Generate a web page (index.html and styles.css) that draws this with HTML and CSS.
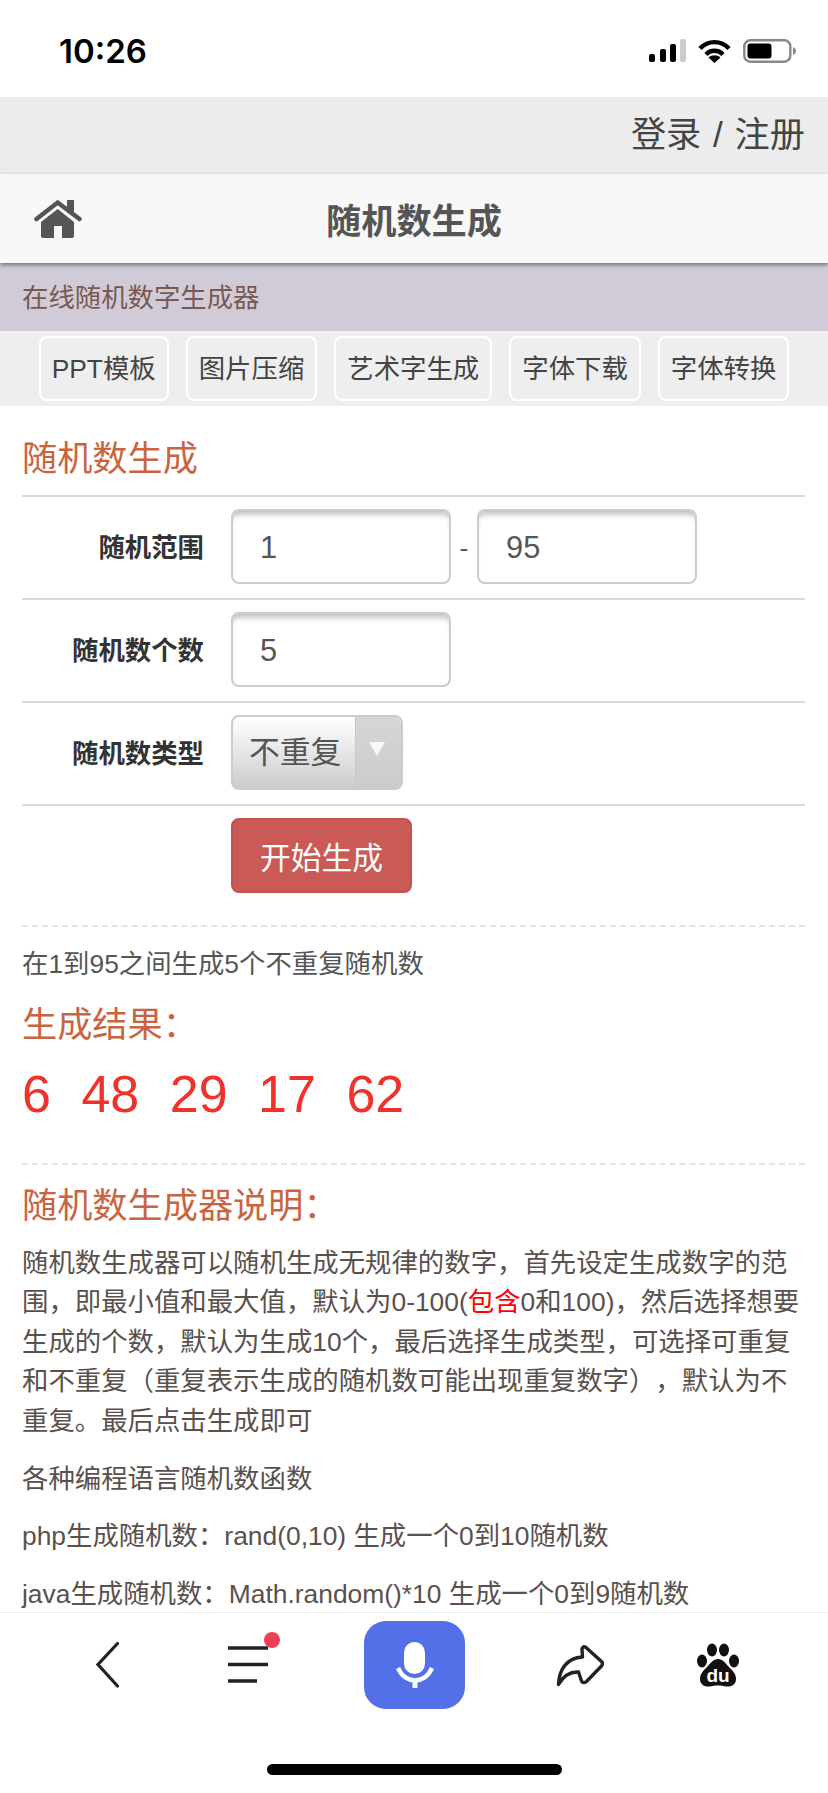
FILE: index.html
```html
<!DOCTYPE html>
<html lang="zh-CN">
<head>
  <meta charset="UTF-8" />
  <meta name="viewport" content="width=device-width, initial-scale=1.0"/>
  <title>随机数生成</title>
  <link rel="stylesheet" href="styles.css">
</head>
<body>
  <div class="page">
    <div class="status-bar">
      <span class="time">10:26</span>
      <div class="status-icons">
        <svg width="37" height="24" viewBox="0 0 37 24">
          <rect x="0" y="15" width="6" height="8" rx="2" fill="#000"/>
          <rect x="11" y="10" width="6" height="13" rx="2" fill="#000"/>
          <rect x="21" y="5" width="6" height="18" rx="2" fill="#000"/>
          <rect x="31" y="0" width="6" height="23" rx="2" fill="#ccc"/>
        </svg>
        <svg width="33" height="24" viewBox="0 0 33 24">
          <path d="M2 9.5C10 1 23 1 31 9.5M8 15.5C12.5 10.5 20.5 10.5 25 15.5" fill="none" stroke="#000" stroke-width="4.4"/>
          <path d="M16.5 24L10.5 18.5C14 15.5 19 15.5 22.5 18.5Z" fill="#000"/>
        </svg>
        <svg width="53" height="24" viewBox="0 0 53 24">
          <rect x="1.3" y="1.3" width="46" height="21.4" rx="6" fill="none" stroke="#888" stroke-width="2.4"/>
          <rect x="4.5" y="4.5" width="24" height="15" rx="3" fill="#000"/>
          <path d="M50 8C52 9 53 10.5 53 12C53 13.5 52 15 50 16Z" fill="#888"/>
        </svg>
      </div>
    </div>

    <div class="login-bar">登录 / 注册</div>

    <header class="title-bar">
      <svg class="home-icon" width="48" height="40" viewBox="0 0 48 40">
        <rect x="33" y="1" width="7" height="13" fill="#555"/>
        <path d="M2.5 20L23.7 3.5L45.5 20" fill="none" stroke="#555" stroke-width="4.5" stroke-linecap="round"/>
        <path d="M7 23L23.7 10L40 23V37Q40 39 38 39H28V27H20V39H9Q7 39 7 37Z" fill="#555"/>
      </svg>
      <h1>随机数生成</h1>
    </header>

    <div class="sub-bar">在线随机数字生成器</div>

    <nav class="tools">
      <a class="tool-btn">PPT模板</a>
      <a class="tool-btn">图片压缩</a>
      <a class="tool-btn">艺术字生成</a>
      <a class="tool-btn">字体下载</a>
      <a class="tool-btn">字体转换</a>
    </nav>

    <main class="content">
      <h2 class="form-title">随机数生成</h2>

      <div class="form-row">
        <label>随机范围</label>
        <input type="text" value="1" />
        <span class="dash">-</span>
        <input type="text" value="95" />
      </div>
      <div class="form-row">
        <label>随机数个数</label>
        <input type="text" value="5" />
      </div>
      <div class="form-row">
        <label>随机数类型</label>
        <div class="select">
          <span class="select-value">不重复</span>
          <span class="select-arrow"><i></i></span>
        </div>
      </div>
      <div class="form-row">
        <label></label>
        <button class="submit">开始生成</button>
      </div>

      <div class="result">
        <p class="summary">在1到95之间生成5个不重复随机数</p>
        <h2>生成结果：</h2>
        <div class="numbers">
          <span>6</span>
          <span>48</span>
          <span>29</span>
          <span>17</span>
          <span>62</span>
        </div>
      </div>

      <div class="intro">
        <h2>随机数生成器说明：</h2>
        <p>随机数生成器可以随机生成无规律的数字，首先设定生成数字的范围，即最小值和最大值，默认为0-100(<span class="red">包含</span>0和100)，然后选择想要生成的个数，默认为生成10个，最后选择生成类型，可选择可重复和不重复（重复表示生成的随机数可能出现重复数字），默认为不重复。最后点击生成即可</p>
        <p>各种编程语言随机数函数</p>
        <p>php生成随机数：rand(0,10) 生成一个0到10随机数</p>
        <p>java生成随机数：Math.random()*10 生成一个0到9随机数</p>
      </div>
    </main>

    <footer class="tab-bar">
      <div class="tabs">
        <svg class="tab-back" width="23" height="46" viewBox="0 0 23 46">
          <path d="M21.5 1.5L2 22.5L21.5 44" fill="none" stroke="#222" stroke-width="3.2" stroke-linecap="round"/>
        </svg>
        <svg class="tab-menu" width="52" height="66" viewBox="0 0 52 66">
          <path d="M0 16H40M0 32.5H40M0 49H29" fill="none" stroke="#222" stroke-width="3.6"/>
          <circle cx="44" cy="8" r="8" fill="#ef3e55"/>
        </svg>
        <div class="tab-mic">
          <svg width="38" height="46" viewBox="0 0 38 46">
            <rect x="8" y="0" width="21" height="32" rx="10.5" fill="#fff"/>
            <path d="M2 26C6 35 13 38.5 19 38.5C25 38.5 32 35 36 26" fill="none" stroke="#fff" stroke-width="4.4"/>
            <path d="M19 38V46" stroke="#fff" stroke-width="5"/>
          </svg>
        </div>
        <svg class="tab-share" width="48" height="44" viewBox="0 0 48 44">
          <path d="M2.5 41.5C3 26 11 15 26.5 14L26 6Q27 2.5 30 4.5L45.5 18.5Q47.5 20.5 45.5 23L30.5 38.5Q27.5 41 25.5 38L22.5 29C14 28.5 8 32 2.5 41.5Z" fill="none" stroke="#222" stroke-width="3.4" stroke-linejoin="round"/>
        </svg>
        <svg class="tab-baidu" width="42" height="44" viewBox="0 0 42 44">
          <ellipse cx="5" cy="18" rx="5" ry="6.5" fill="#111"/>
          <ellipse cx="15" cy="7" rx="5" ry="6.5" fill="#111"/>
          <ellipse cx="27" cy="7" rx="5" ry="6.5" fill="#111"/>
          <ellipse cx="37" cy="18" rx="5" ry="6.5" fill="#111"/>
          <path d="M21 16C26 16 28 20 32 24C36 28 39 31 39 36C39 41 35 44 30 43.5C26 43 24 42.5 21 42.5C18 42.5 16 43 12 43.5C7 44 3 41 3 36C3 31 6 28 10 24C14 20 16 16 21 16Z" fill="#111"/>
          <text class="baidu-text" x="21" y="39" text-anchor="middle">du</text>
        </svg>
      </div>
      <div class="home-indicator"></div>
    </footer>
  </div>
</body>
</html>
```

FILE: styles.css
```css
* {
  box-sizing: border-box;
}

body {
  margin: 0;
  background: #fff;
  font-family: "Liberation Sans", "Noto Sans CJK SC", sans-serif;
  color: #555;
}

.page {
  height: 1793px;
  display: flex;
  flex-direction: column;
  overflow: hidden;
}

/* Phone status bar */
.status-bar {
  height: 97px;
  flex: none;
  padding: 4px 32px 0 59px;
  display: flex;
  justify-content: space-between;
  align-items: center;
}

.time {
  font-family: Inter, "Liberation Sans", sans-serif;
  font-size: 33px;
  font-weight: 600;
  color: #000;
}

.status-icons {
  display: flex;
  align-items: center;
  gap: 12px;
}

.login-bar {
  height: 77px;
  flex: none;
  padding-right: 23px;
  background: #ececec;
  color: #444;
  font-size: 35.2px;
  line-height: 75px;
  word-spacing: 2px;
  text-align: right;
}

.title-bar {
  height: 89px;
  flex: none;
  padding: 0 82px 0 34px;
  display: flex;
  align-items: center;
  background: #f8f8f8;
  box-shadow: 0 2px 4px rgba(0, 0, 0, 0.45);
  position: relative;
}

.home-icon {
  flex: none;
}

.title-bar h1 {
  flex: 1;
  margin: 0;
  font-size: 35.2px;
  font-weight: bold;
  color: #555;
  text-align: center;
}

.sub-bar {
  height: 68px;
  flex: none;
  padding-left: 22px;
  background: #d1cbd8;
  color: #7a5a50;
  font-size: 26.4px;
  line-height: 70px;
}

.tools {
  height: 75px;
  flex: none;
  display: flex;
  justify-content: center;
  align-items: center;
  gap: 17px;
  background: #eee;
}

.tool-btn {
  height: 65px;
  padding: 0 11px;
  border: 2px solid #fff;
  border-radius: 8px;
  color: #444;
  font-size: 26.4px;
  line-height: 63px;
}

.content {
  flex: 1;
  min-height: 0;
  padding: 0 23px 0 22px;
  overflow: hidden;
}

h2 {
  margin: 0;
  color: #c9643f;
  font-size: 35.2px;
  font-weight: normal;
  line-height: 48px;
}

.form-title {
  padding: 29px 0 12px;
}

.form-row {
  height: 103px;
  padding-top: 12px;
  display: flex;
  align-items: flex-start;
  border-top: 2px solid #dadada;
}

.form-row label {
  width: 182px;
  flex: none;
  margin-right: 27px;
  color: #333;
  font-size: 26.4px;
  font-weight: bold;
  line-height: 78px;
  text-align: right;
}

.form-row input {
  width: 220px;
  height: 75px;
  padding: 3px 27px 0;
  border: 2px solid #ccc;
  border-radius: 8px;
  outline: none;
  box-shadow: inset 0 7px 6px -4px rgba(0, 0, 0, 0.28);
  color: #555;
  font-family: inherit;
  font-size: 30.8px;
}

.dash {
  width: 26px;
  text-align: center;
  font-size: 26.4px;
  line-height: 78px;
}

.select {
  width: 172px;
  height: 75px;
  display: flex;
  border: 2px solid #ccc;
  border-radius: 8px;
  background: linear-gradient(#fff, #ccc);
  overflow: hidden;
}

.select-value {
  flex: 1;
  padding-left: 16px;
  font-size: 30.8px;
  line-height: 71px;
}

.select-arrow {
  width: 46px;
  flex: none;
  padding: 25px 3px 0 0;
  display: flex;
  justify-content: center;
  align-items: flex-start;
  background: linear-gradient(#d6d6d6, #cbcbcb);
  border-left: 1px solid #c8c8c8;
}

.select-arrow i {
  width: 0;
  height: 0;
  border-left: 8px solid transparent;
  border-right: 8px solid transparent;
  border-top: 14px solid #f7f7f7;
}

.submit {
  width: 181px;
  height: 75px;
  padding: 0;
  border: 2px solid #c5504c;
  border-radius: 8px;
  background: #c95a55;
  color: #fff;
  font-family: inherit;
  font-size: 30.8px;
}

.result {
  margin-top: 18px;
  padding-top: 18px;
  border-top: 2px dashed #e4e4e4;
}

.summary {
  margin: 0 0 16px;
  font-size: 26.4px;
  line-height: 39.6px;
}

.numbers {
  margin: 15px 0 39px;
  display: flex;
  gap: 30.5px;
  color: #f0322a;
  font-size: 52px;
  line-height: 60px;
}

.intro {
  padding-top: 17px;
  border-top: 2px dashed #e4e4e4;
}

.intro h2 {
  margin-bottom: 14px;
}

.intro p {
  margin: 0 0 18px;
  color: #5a504c;
  font-size: 26.4px;
  line-height: 39.6px;
  text-spacing-trim: space-all;
}

.red {
  color: #f00;
}

/* Browser toolbar at the bottom */
.tab-bar {
  flex: none;
  height: 181px;
  padding-top: 8px;
  border-top: 1px solid #f0f0f0;
  background: #fff;
}

.tabs {
  height: 88px;
  display: flex;
  align-items: center;
}

.tab-back {
  margin-left: 96px;
}

.tab-menu {
  margin-left: 109px;
}

.tab-mic {
  width: 101px;
  height: 88px;
  margin-left: 84px;
  display: flex;
  justify-content: center;
  align-items: center;
  border-radius: 22px;
  background: #5470e8;
}

.tab-share {
  margin-left: 91px;
}

.tab-baidu {
  margin-left: 93px;
}

.baidu-text {
  fill: #fff;
  font-family: "Liberation Sans", sans-serif;
  font-size: 19px;
  font-weight: bold;
}

.home-indicator {
  width: 295px;
  height: 11px;
  margin: 55px auto 0;
  border-radius: 6px;
  background: #000;
}
```
